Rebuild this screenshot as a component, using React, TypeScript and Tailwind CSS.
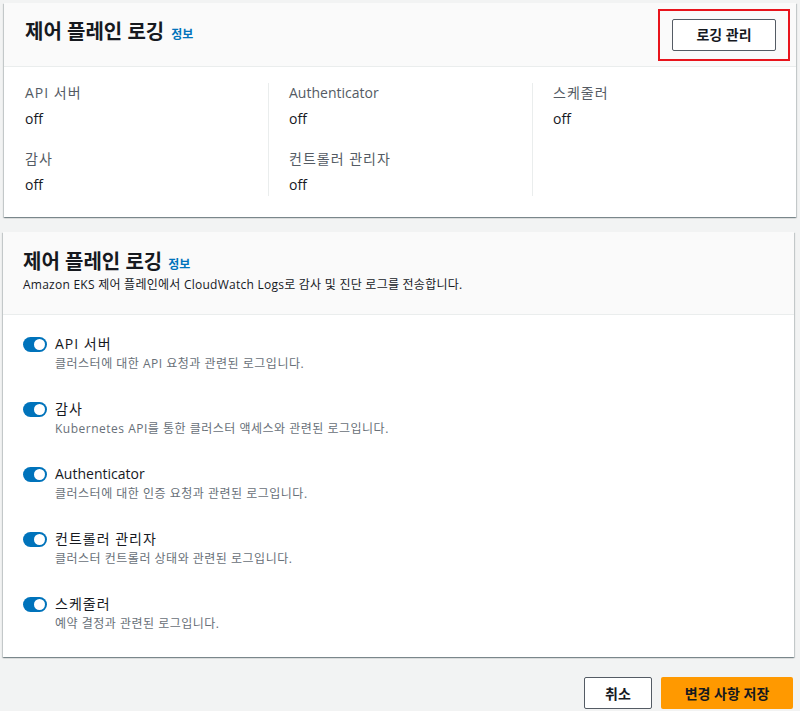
import React from 'react';

interface LogType {
  name: string;
  desc: string;
  latin?: boolean;
}

const logTypes: LogType[] = [
  { name: 'API 서버', desc: '클러스터에 대한 API 요청과 관련된 로그입니다.' },
  { name: '감사', desc: 'Kubernetes API를 통한 클러스터 액세스와 관련된 로그입니다.' },
  { name: 'Authenticator', desc: '클러스터에 대한 인증 요청과 관련된 로그입니다.', latin: true },
  { name: '컨트롤러 관리자', desc: '클러스터 컨트롤러 상태와 관련된 로그입니다.' },
  { name: '스케줄러', desc: '예약 결정과 관련된 로그입니다.' },
];

const panelShadow =
  'shadow-[0_1px_1px_0_rgba(0,28,36,0.3),1px_1px_1px_0_rgba(0,28,36,0.15),-1px_1px_1px_0_rgba(0,28,36,0.15)]';

const Field: React.FC<{ label: string; value: string; first?: boolean; latin?: boolean }> = ({
  label,
  value,
  first,
  latin,
}) => (
  <div className={first ? '' : 'mt-[19px]'}>
    <div className={`text-[14px] leading-[20px] text-[#545b64] ${latin ? '' : 'tracking-[1px]'}`}>{label}</div>
    <div className="mt-[5px] text-[14px] leading-[22px] text-[#16191f]">{value}</div>
  </div>
);

const Toggle: React.FC = () => (
  <div className="w-[24px] h-[15px] rounded-full bg-[#0073bb] flex items-center justify-end px-[2px] shrink-0">
    <div className="w-[11px] h-[11px] rounded-full bg-white" />
  </div>
);

const App: React.FC = () => {
  return (
    <div className="min-h-[711px] bg-[#f2f3f3] pt-[3px] font-['Open_Sans','Noto_Sans_CJK_KR',sans-serif] text-[#16191f]">
      {/* current settings */}
      <div className={`mx-[4px] bg-white ${panelShadow}`}>
        <div className="h-[64px] bg-[#fafafa] border-b border-[#eaeded] flex items-center justify-between pl-[21px] pr-[6px]">
          <div className="flex items-baseline gap-[7px] mb-[5px]">
            <h2 className="text-[20px] leading-[26px] font-bold">제어 플레인 로깅</h2>
            <a className="text-[12px] font-bold text-[#0073bb]">정보</a>
          </div>
          <div className="border-2 border-[#e8141c] px-[12px] py-[8px]">
            <button className="w-[104px] h-[32px] bg-white border border-[#545b64] rounded-[2px] text-[14px] font-bold text-[#16191f]">
              로깅 관리
            </button>
          </div>
        </div>
        <div className="grid grid-cols-[243px_264px_1fr] pl-[21px] pt-[16px] pb-[21px]">
          <div>
            <Field label="API 서버" value="off" first />
            <Field label="감사" value="off" />
          </div>
          <div className="border-l border-[#eaeded] pl-[20px]">
            <Field label="Authenticator" value="off" first latin />
            <Field label="컨트롤러 관리자" value="off" />
          </div>
          <div className="border-l border-[#eaeded] pl-[20px]">
            <Field label="스케줄러" value="off" first />
          </div>
        </div>
      </div>

      {/* edit form */}
      <div className={`mt-[15px] ml-[3px] mr-[6px] bg-white ${panelShadow}`}>
        <div className="bg-[#fafafa] border-b border-[#eaeded] pl-[20px] pt-[17px] pb-[20px]">
          <div className="flex items-baseline gap-[6px]">
            <h2 className="text-[20px] leading-[26px] font-bold">제어 플레인 로깅</h2>
            <a className="text-[12px] font-bold text-[#0073bb]">정보</a>
          </div>
          <p className="mt-[1px] text-[12px] leading-[18px] tracking-[0.25px] text-[#16191f]">
            Amazon EKS 제어 플레인에서 CloudWatch Logs로 감사 및 진단 로그를 전송합니다.
          </p>
        </div>
        <div className="pl-[20px] pt-[19px] pb-[25px] flex flex-col gap-[27px]">
          {logTypes.map((t) => (
            <div key={t.name} className="flex flex-col">
              <div className="flex items-center gap-[8px] h-[20px]">
                <Toggle />
                <span className={`text-[14px] leading-[20px] text-[#16191f] ${t.latin ? '' : 'tracking-[1px]'}`}>
                  {t.name}
                </span>
              </div>
              <div className="pl-[32px] mt-[2px] text-[12px] leading-[16px] tracking-[0.5px] text-[#687078]">
                {t.desc}
              </div>
            </div>
          ))}
        </div>
      </div>

      <div className="flex justify-end gap-[9px] pr-[7px] pt-[20px]">
        <button className="w-[68px] h-[32px] bg-white border border-[#545b64] rounded-[2px] text-[14px] font-bold text-[#16191f]">
          취소
        </button>
        <button className="w-[132px] h-[32px] bg-[#ff9900] rounded-[2px] text-[14px] font-bold text-[#16191f]">
          변경 사항 저장
        </button>
      </div>
    </div>
  );
};

export default App;
